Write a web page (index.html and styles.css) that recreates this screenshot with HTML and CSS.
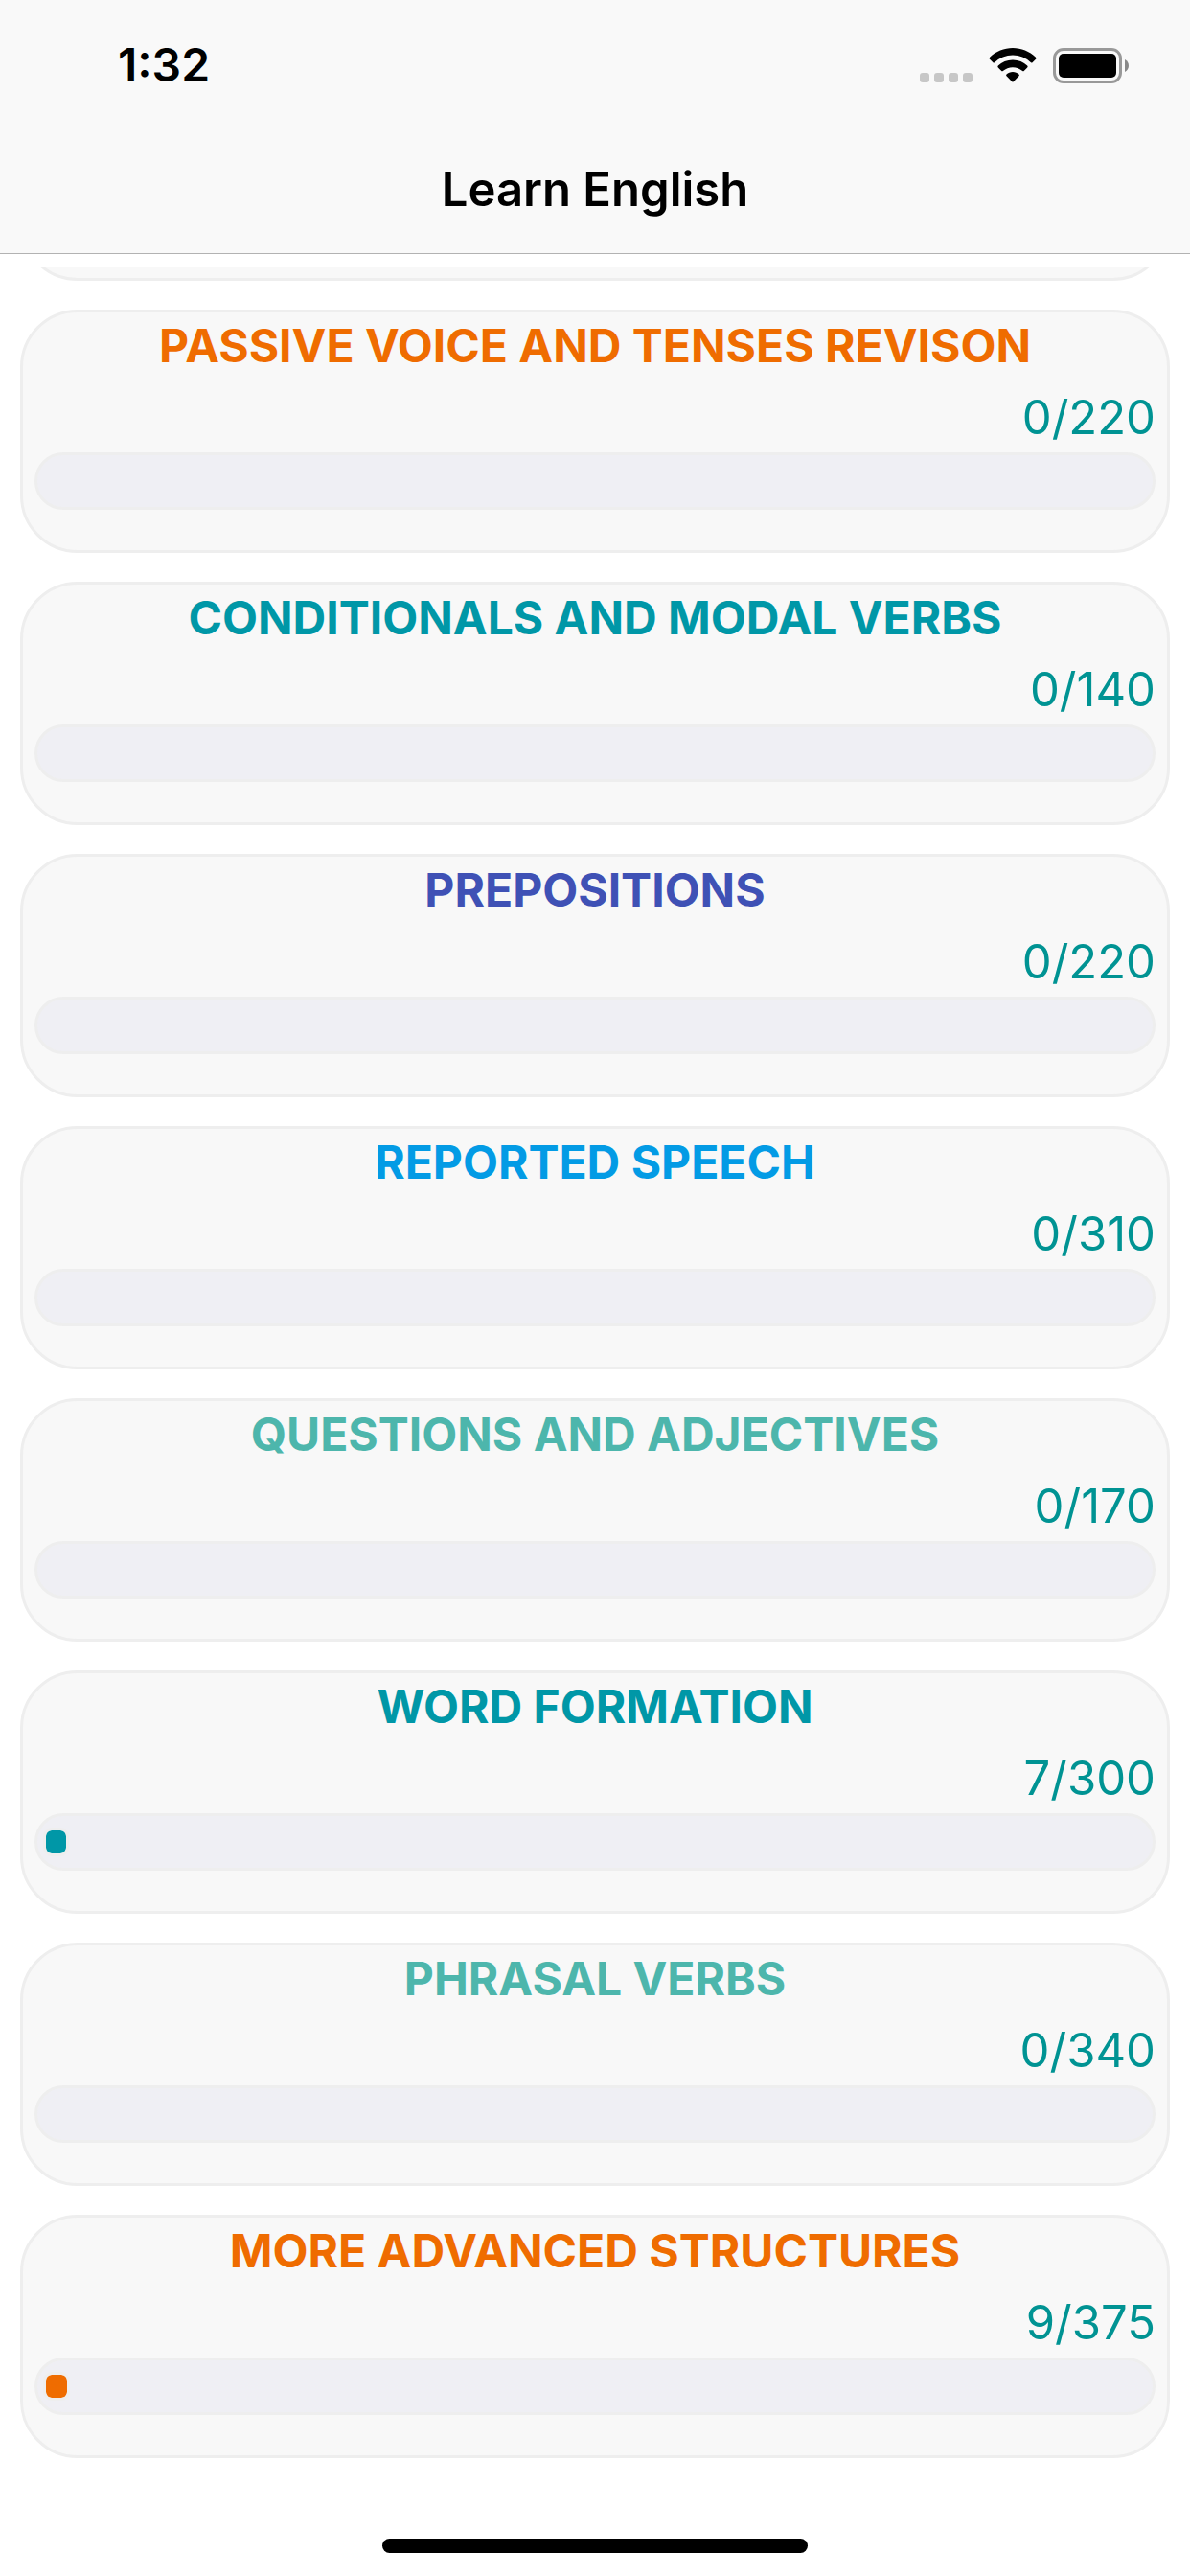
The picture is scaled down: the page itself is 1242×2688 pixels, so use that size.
FILE: index.html
```html
<!DOCTYPE html>
<html lang="en">
<head>
    <meta charset="UTF-8">
    <meta name="viewport" content="width=device-width, initial-scale=1.0">
    <title>Learn English</title>
    <link rel="stylesheet" href="styles.css">
</head>
<body>
    <header class="header">
        <div class="status">
            <span class="time">1:32</span>
            <div class="status-icons">
                <svg class="signal" viewBox="0 0 55 36" aria-hidden="true">
                    <rect x="0" y="26" width="10" height="10" rx="3"/>
                    <rect x="15" y="26" width="10" height="10" rx="3"/>
                    <rect x="30" y="26" width="10" height="10" rx="3"/>
                    <rect x="45" y="26" width="10" height="10" rx="3"/>
                </svg>
                <svg class="wifi" viewBox="0 0 50 36" aria-hidden="true">
                    <path d="M25 0C34 0 42.500 3.500 49 9.700Q50 10.700 49 11.700L45.500 15.200Q44.800 15.900 44 15.200A27.500 27.500 0 0 0 6 15.200Q5.200 15.900 4.500 15.200L1 11.700Q0 10.700 1 9.700C7.500 3.500 16 0 25 0Z"/>
                    <path d="M25 12.500C31 12.500 36.200 14.800 40.200 18.500Q41.200 19.500 40.200 20.500L36.700 24Q36 24.700 35.200 24A15.500 15.500 0 0 0 14.800 24Q14 24.700 13.300 24L9.800 20.500Q8.800 19.500 9.800 18.500C13.800 14.800 19 12.500 25 12.500Z"/>
                    <path d="M25 25C27.500 25 29.800 25.900 31.500 27.400Q32.400 28.300 31.500 29.200L25.700 35.200Q25 35.900 24.300 35.200L18.500 29.200Q17.600 28.300 18.500 27.400C20.200 25.900 22.500 25 25 25Z"/>
                </svg>
                <svg class="battery" viewBox="0 0 79 37" aria-hidden="true">
                    <rect x="1.500" y="1.500" width="69" height="34" rx="9.500" fill="none" stroke="#999" stroke-width="3"/>
                    <rect x="6" y="6" width="60" height="25" rx="5"/>
                    <path d="M75 12C80.300 14.500 80.300 22.500 75 25Z" fill="#888"/>
                </svg>
            </div>
        </div>
        <h1>Learn English</h1>
    </header>

    <main class="list">
        <div class="card card-scrolled"></div>
        <a class="card orange" href="#">
            <h2>PASSIVE VOICE AND TENSES REVISON</h2>
            <p class="count">0/220</p>
            <div class="track"></div>
        </a>
        <a class="card cyan" href="#">
            <h2>CONDITIONALS AND MODAL VERBS</h2>
            <p class="count">0/140</p>
            <div class="track"></div>
        </a>
        <a class="card indigo" href="#">
            <h2>PREPOSITIONS</h2>
            <p class="count">0/220</p>
            <div class="track"></div>
        </a>
        <a class="card blue" href="#">
            <h2>REPORTED SPEECH</h2>
            <p class="count">0/310</p>
            <div class="track"></div>
        </a>
        <a class="card teal" href="#">
            <h2>QUESTIONS AND ADJECTIVES</h2>
            <p class="count">0/170</p>
            <div class="track"></div>
        </a>
        <a class="card cyan" href="#">
            <h2>WORD FORMATION</h2>
            <p class="count">7/300</p>
            <div class="track"><div class="fill" style="width: 2.33%"></div></div>
        </a>
        <a class="card teal" href="#">
            <h2>PHRASAL VERBS</h2>
            <p class="count">0/340</p>
            <div class="track"></div>
        </a>
        <a class="card orange" href="#">
            <h2>MORE ADVANCED STRUCTURES</h2>
            <p class="count">9/375</p>
            <div class="track"><div class="fill" style="width: 2.4%"></div></div>
        </a>
    </main>

    <div class="home-bar"></div>
</body>
</html>
```

FILE: styles.css
```css
* {
    box-sizing: border-box;
}
body {
    font-family: Inter, 'Liberation Sans', sans-serif;
    margin: 0;
    min-height: 100vh;
    display: flex;
    flex-direction: column;
    background-color: #fff;
    color: #000;
}
.header {
    background-color: #f9f9f9;
    border-bottom: 1px solid #b2b2b2;
}
.status {
    display: flex;
    justify-content: space-between;
    align-items: center;
    height: 132px;
    padding: 4px 64px 0 123px;
}
.time {
    font-size: 48px;
    font-weight: 600;
    line-height: 60px;
}
.status-icons {
    display: flex;
    align-items: center;
    gap: 17px;
}
.signal {
    width: 55px;
    height: 36px;
    fill: #c7c7c7;
}
.wifi {
    width: 50px;
    height: 36px;
}
.battery {
    width: 79px;
    height: 37px;
}
h1 {
    margin: 0;
    font-size: 49px;
    font-weight: 600;
    line-height: 132px;
    text-align: center;
}
.list {
    display: flex;
    flex-direction: column;
    gap: 30px;
    margin-top: 14px;
    padding: 0 21px;
    overflow: hidden;
}
.card {
    display: block;
    padding: 6px 12px 42px;
    background-color: #f8f8f8;
    border: 3px solid #eee;
    border-radius: 60px;
    text-decoration: none;
}
/* the card that is scrolled under the header */
.card-scrolled {
    height: 254px;
    margin-top: -240px;
}
h2 {
    margin: 0 0 16px;
    font-size: 48px;
    font-weight: 700;
    line-height: 58px;
    text-align: center;
}
.count {
    margin: 0 0 6px;
    font-size: 49px;
    line-height: 60px;
    text-align: right;
    color: #009393;
}
.track {
    height: 60px;
    padding: 12px 6px;
    background-color: #efeff4;
    border: 3px solid #eee;
    border-radius: 30px;
}
.fill {
    height: 30px;
    background-color: currentColor;
    background-clip: padding-box;
    border: 3px solid #eee;
    border-radius: 9px;
}
.orange {
    color: #ef6c00;
}
.cyan {
    color: #0097a7;
}
.indigo {
    color: #3f51b5;
}
.blue {
    color: #039be5;
}
.teal {
    color: #4db6ac;
}
.home-bar {
    width: 444px;
    height: 15px;
    margin: auto auto 24px;
    background-color: #000;
    border-radius: 8px;
}
```
